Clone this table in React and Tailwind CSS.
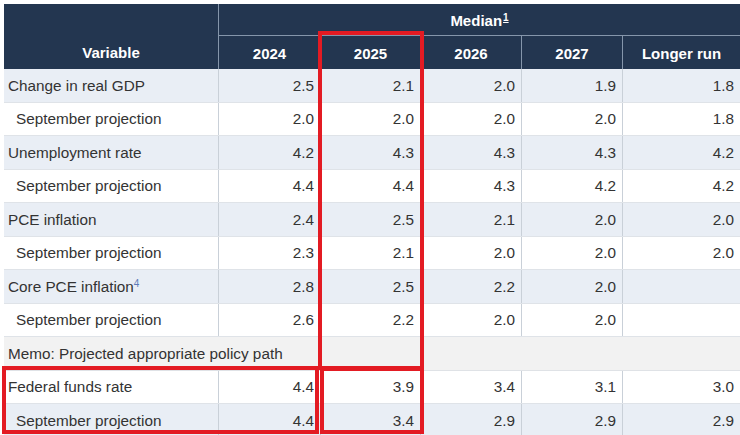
const cols = "grid grid-cols-[214px_102px_100px_101px_101px_118px]";

const rows = [
  { label: "Change in real GDP", vals: ["2.5", "2.1", "2.0", "1.9", "1.8"], bg: "bg-[#e9eef5]", h: "h-[34px]" },
  { label: "September projection", sub: true, vals: ["2.0", "2.0", "2.0", "2.0", "1.8"], bg: "bg-white", h: "h-[33px]" },
  { label: "Unemployment rate", vals: ["4.2", "4.3", "4.3", "4.3", "4.2"], bg: "bg-[#e9eef5]", h: "h-[34px]" },
  { label: "September projection", sub: true, vals: ["4.4", "4.4", "4.3", "4.2", "4.2"], bg: "bg-white", h: "h-[33px]" },
  { label: "PCE inflation", vals: ["2.4", "2.5", "2.1", "2.0", "2.0"], bg: "bg-[#e9eef5]", h: "h-[34px]" },
  { label: "September projection", sub: true, vals: ["2.3", "2.1", "2.0", "2.0", "2.0"], bg: "bg-white", h: "h-[33px]" },
  { label: "Core PCE inflation", note: "4", vals: ["2.8", "2.5", "2.2", "2.0", ""], bg: "bg-[#e9eef5]", h: "h-[34px]" },
  { label: "September projection", sub: true, vals: ["2.6", "2.2", "2.0", "2.0", ""], bg: "bg-white", h: "h-[33px]" },
  { memo: "Memo: Projected appropriate policy path", bg: "bg-[#f2f2f2]", h: "h-[34px]" },
  { label: "Federal funds rate", vals: ["4.4", "3.9", "3.4", "3.1", "3.0"], bg: "bg-white", h: "h-[33px]" },
  { label: "September projection", sub: true, vals: ["4.4", "3.4", "2.9", "2.9", "2.9"], bg: "bg-[#e9eef5]", h: "h-[34px]" },
];

const years = ["2024", "2025", "2026", "2027", "Longer run"];

const Projections = () => {
  return (
    <div className="relative w-[740px] h-[435px] overflow-hidden bg-white font-['Liberation_Sans',Arial,sans-serif] text-[15.3px] text-[#333]">
      <div className="pt-1 pl-1">
        <div className="w-[736px]">
          {/* header */}
          <div className={`${cols} grid-rows-[32px_33px] bg-[#233650] text-white font-bold text-[15px]`}>
            <div className="row-span-2 flex items-end justify-center pb-[5px]">Variable</div>
            <div className="col-span-5 flex items-center justify-center pt-[3px] border-l border-b border-[#8596ab]">
              <span>
                Median
                <sup className="text-[10px] underline ml-[1px]">1</sup>
              </span>
            </div>
            {years.map((y) => (
              <div key={y} className="flex items-center justify-center pt-[3px] border-l border-[#8596ab]">
                {y}
              </div>
            ))}
          </div>

          {/* body */}
          {rows.map((r, idx) =>
            r.memo ? (
              <div key={idx} className={`${r.h} ${r.bg} flex items-center pl-1 pt-[1px] border-b border-[#dfe2e6]`}>
                {r.memo}
              </div>
            ) : (
              <div key={idx} className={`${cols} ${r.h} ${r.bg} border-b border-[#dfe3e8]`}>
                <div className={`flex items-center pt-[1px] ${r.sub ? "pl-3" : "pl-1"}`}>
                  <span>
                    {r.label}
                    {r.note && <sup className="text-[10px] text-[#5b7bb8]">{r.note}</sup>}
                  </span>
                </div>
                {r.vals.map((v, i) => (
                  <div key={i} className="flex items-center justify-end pt-[1px] pr-[6px] border-l border-[#c9d0d8]">
                    {v}
                  </div>
                ))}
              </div>
            )
          )}
        </div>
      </div>

      {/* highlight boxes */}
      <div className="absolute left-[318px] top-[31px] w-[106px] h-[339px] border-4 border-[#e31b23]" />
      <div className="absolute left-[320px] top-[367px] w-[104px] h-[67px] border-4 border-[#e31b23]" />
      <div className="absolute left-[2px] top-[366px] w-[317px] h-[68px] border-4 border-[#e31b23]" />
    </div>
  );
};

export default function App() {
  return <Projections />;
}
